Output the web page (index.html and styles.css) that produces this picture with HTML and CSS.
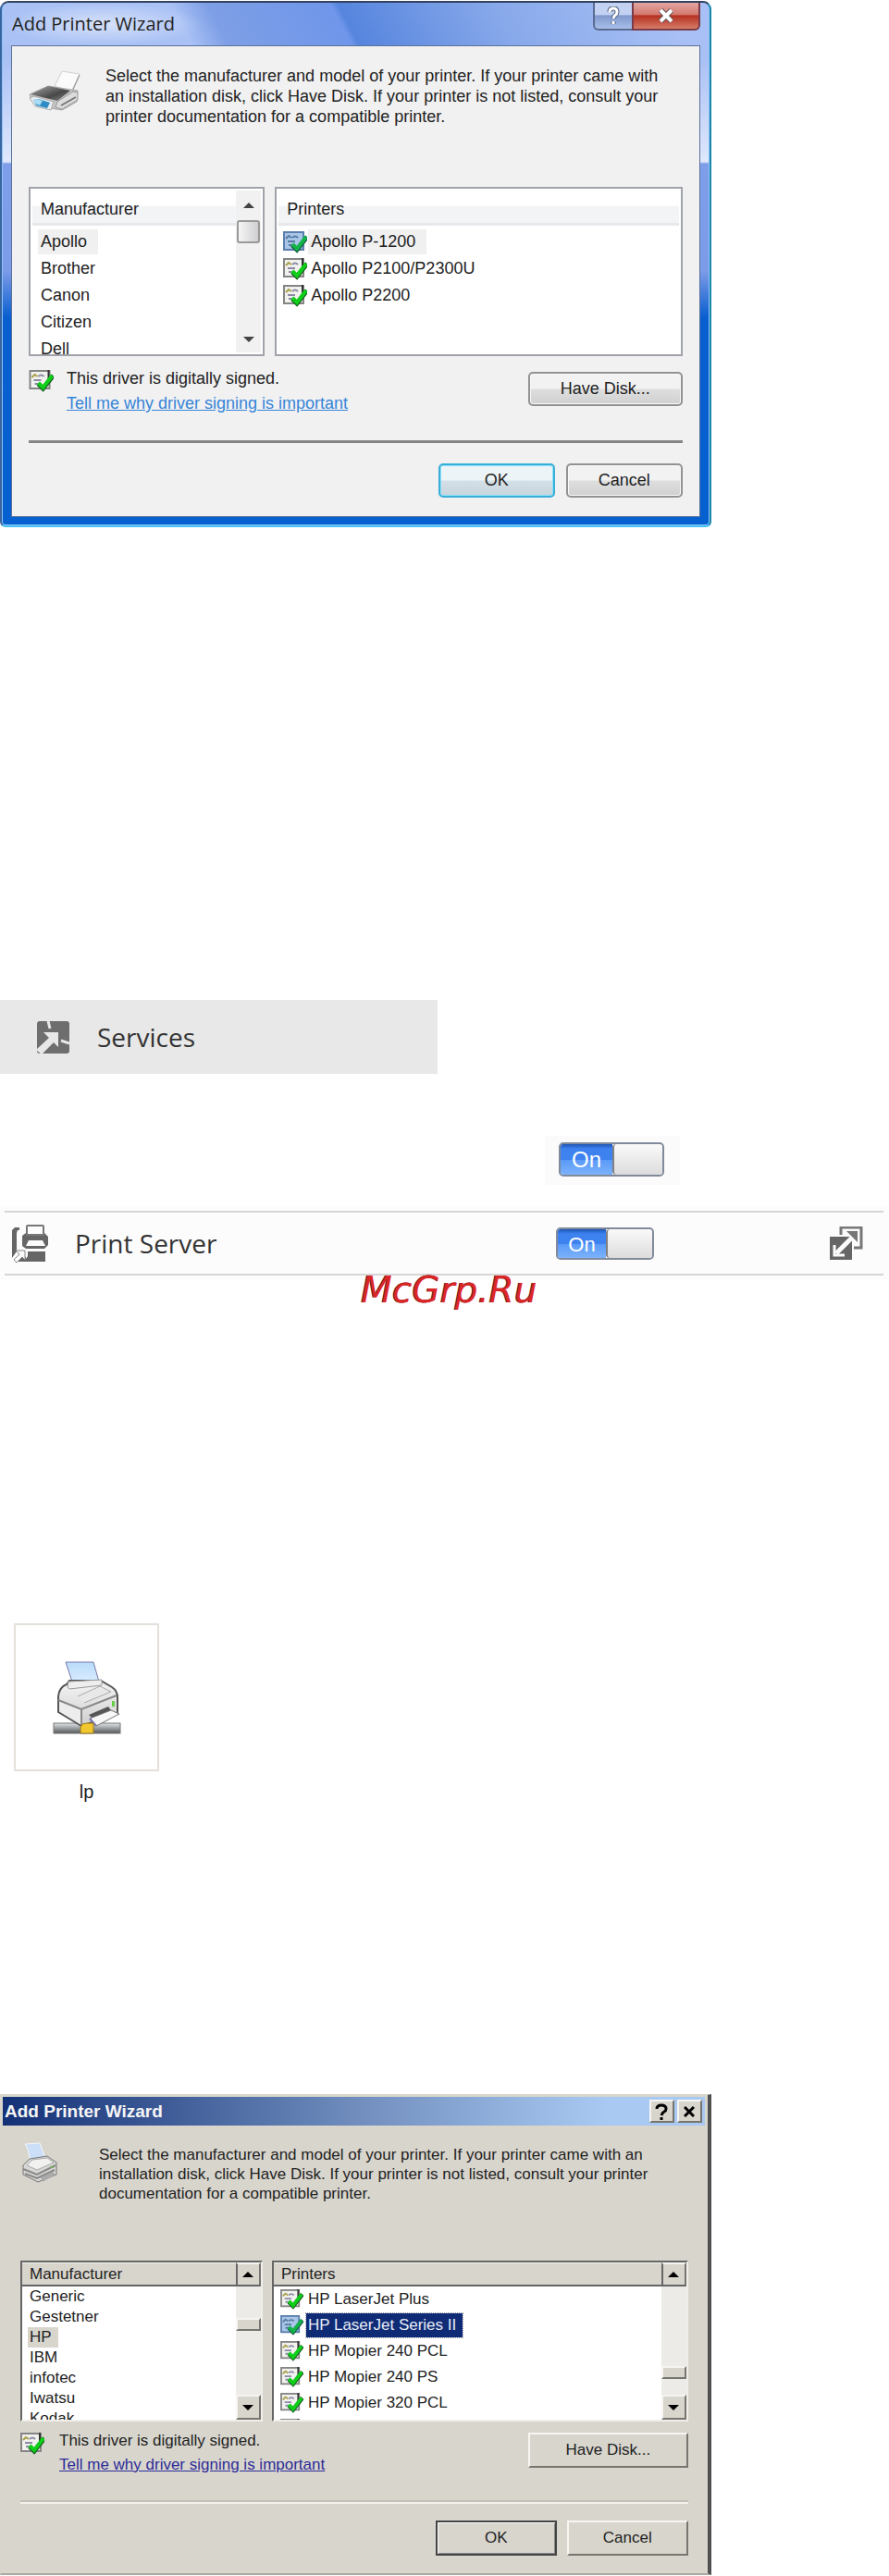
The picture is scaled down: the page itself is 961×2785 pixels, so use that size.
FILE: index.html
```html
<!DOCTYPE html>
<html lang="en">
<head>
<meta charset="utf-8">
<title>Add Printer Wizard</title>
<link rel="stylesheet" href="styles.css">
</head>
<body>
<svg class="defs" aria-hidden="true">
  <symbol id="signed" viewBox="0 0 26 24">
    <rect x="1" y="1" width="21" height="19" fill="#f1f1ee" stroke="#858585" stroke-width="2"/>
    <path d="M3 8l3-3 3 2" fill="none" stroke="#a8a047" stroke-width="2"/>
    <path d="M10 7q3-3 6 0M5 11h8M6 15h5" fill="none" stroke="#8b8ba8" stroke-width="2"/>
    <path d="M21 0v13" stroke="#333" stroke-width="2"/>
    <path d="M10 15l5 5L26 6" fill="none" stroke="#175c20" stroke-width="5"/>
    <path d="M10 14l5 5L25 6" fill="none" stroke="#0fd018" stroke-width="4"/>
  </symbol>
  <symbol id="signed-blue" viewBox="0 0 26 24">
    <rect x="1" y="1" width="21" height="19" fill="#a9c6e8" stroke="#5b7fac" stroke-width="2"/>
    <path d="M3 8l3-3 3 2M10 7q3-3 6 0M5 11h8M6 15h5" fill="none" stroke="#55799f" stroke-width="2"/>
    <path d="M10 15l5 5L26 6" fill="none" stroke="#145846" stroke-width="5"/>
    <path d="M10 14l5 5L25 6" fill="none" stroke="#12b548" stroke-width="4"/>
  </symbol>
  <symbol id="up" viewBox="0 0 12 6"><path d="M0 6l6-6 6 6z"/></symbol>
  <symbol id="down" viewBox="0 0 12 6"><path d="M0 0h12l-6 6z"/></symbol>
</svg>

<section class="vista" aria-label="Add Printer Wizard">
  <header class="vista-title">
    <h1>Add Printer Wizard</h1>
    <div class="vista-controls">
      <button class="help" aria-label="Help"><svg width="14" height="20" viewBox="0 0 14 20"><path d="M3 6q0-4 4-4t4 4q0 2-2 3.500T7 13M7 16v3" fill="none" stroke="#53617c" stroke-width="5"/><path d="M3 6q0-4 4-4t4 4q0 2-2 3.500T7 13M7 16v3" fill="none" stroke="#fff" stroke-width="3"/></svg></button>
      <button class="close" aria-label="Close"><svg width="20" height="16" viewBox="0 0 20 16"><path d="M4 2l12 12M16 2L4 14" stroke="#5d4b57" stroke-width="6"/><path d="M4 2l12 12M16 2L4 14" stroke="#fff" stroke-width="4"/></svg></button>
    </div>
  </header>
  <div class="vista-body">
    <div class="intro">
      <svg class="printer" width="56" height="46" viewBox="0 0 56 46">
        <defs>
          <linearGradient id="dark" x1="0" y1="0" x2="1" y2="1"><stop offset="0" stop-color="#aaa"/><stop offset=".6" stop-color="#484848"/><stop offset="1" stop-color="#888"/></linearGradient>
        </defs>
        <path d="M28 17l8-16 19 3-9 19z" fill="#fbfbfb" stroke="#d0d0d0"/>
        <path d="M47 23l8-18" stroke="#8b8b8b"/>
        <path d="M1 26l20-9 32 5-1 12-16 9-13-2-20-8z" fill="#c4c4c4" stroke="#aaa"/>
        <path d="M2 26l19-9 24 5-14 11z" fill="url(#dark)"/>
        <path d="M31 34l17-11 5 1v8l-17 10-7-2z" fill="#dcdcdc" stroke="#999"/>
        <path d="M35 38l16-9" stroke="#777" stroke-width="2"/>
        <path d="M1 30l5-2 21 6-3 9-17-4z" fill="#e8edf1" stroke="#aaa"/>
        <path d="M5 32l6-1 12 4-3 6-12-3z" fill="#2d8cc6"/>
        <path d="M5 32l5-1 5 2-3 5-5-2z" fill="#a9dcf2"/>
      </svg>
      <p>Select the manufacturer and model of your printer. If your printer came with<br>an installation disk, click Have Disk. If your printer is not listed, consult your<br>printer documentation for a compatible printer.</p>
    </div>
    <div class="lists">
      <div class="list">
        <div class="list-main">
          <h2>Manufacturer</h2>
          <ul><li><span class="picked">Apollo</span></li><li><span>Brother</span></li><li><span>Canon</span></li><li><span>Citizen</span></li><li><span>Dell</span></li></ul>
        </div>
        <div class="scroll"><svg width="12" height="6"><use href="#up"/></svg><i class="thumb"></i><svg class="end" width="12" height="6"><use href="#down"/></svg></div>
      </div>
      <div class="list printers">
        <div class="list-main">
          <h2>Printers</h2>
          <ul>
            <li><svg width="26" height="24"><use href="#signed-blue"/></svg><span class="picked">Apollo P-1200</span></li>
            <li><svg width="26" height="24"><use href="#signed"/></svg><span>Apollo P2100/P2300U</span></li>
            <li><svg width="26" height="24"><use href="#signed"/></svg><span>Apollo P2200</span></li>
          </ul>
        </div>
      </div>
    </div>
    <div class="driver">
      <svg width="27" height="24"><use href="#signed"/></svg>
      <p>This driver is digitally signed.<br><a href="#signing">Tell me why driver signing is important</a></p>
      <button class="btn wide">Have Disk...</button>
    </div>
    <hr>
    <div class="actions"><button class="btn default">OK</button><button class="btn">Cancel</button></div>
  </div>
</section>

<nav class="services">
  <svg width="35" height="35" viewBox="0 0 35 35">
    <rect width="35" height="35" rx="3" fill="#6e6e6e"/>
    <path d="M12 0l2 8M35 24l-9-3" stroke="#e8e8e8" stroke-width="3"/>
    <path d="M7 12h16v16l-5-5L5 36l-6-5 14-13z" fill="#e8e8e8"/>
  </svg>
  <span>Services</span>
</nav>

<div class="toggle-box">
  <label class="toggle large"><input type="checkbox" checked aria-label="Service"><span class="on">On</span><span class="knob"></span></label>
</div>

<div class="service-band">
  <div class="service-row">
    <div class="service-name">
      <svg width="40" height="41" viewBox="0 0 40 41">
        <path d="M0 6l3-3h5v3H6L5 9v15H0z" fill="#666"/>
        <path d="M0 23h5v6l-5 7zM15 40H3l5-5h7z" fill="#666"/>
        <path d="M11 12l4-3h20l4 4v9l-4 4H15l-4-3z" fill="#666"/>
        <path d="M16 11V2q0-1 1-1h16q1 0 1 1v9z" fill="#fcfcfc" stroke="#777" stroke-width="2"/>
        <path d="M18 17h15l3 6H15z" fill="#fcfcfc"/>
        <path d="M17 29h19v11H13l4-6z" fill="#666"/>
        <path d="M4 28h10v10l-3-3-6 6-3-3 6-6z" fill="#fcfcfc" stroke="#888" stroke-width="1"/>
      </svg>
      <span>Print Server</span>
    </div>
    <label class="toggle"><input type="checkbox" checked aria-label="Print Server"><span class="on">On</span><span class="knob"></span></label>
    <a class="open" href="#print-server" aria-label="Open Print Server">
      <svg width="36" height="36" viewBox="0 0 36 36">
        <path d="M12 9V1h22v22h-8" fill="none" stroke="#777" stroke-width="3"/>
        <rect y="11" width="24" height="25" fill="#666"/>
        <path d="M7 29L28 8" stroke="#fcfcfc" stroke-width="5"/>
        <path d="M5 20v11h11" fill="none" stroke="#fcfcfc" stroke-width="3"/>
        <path d="M18 5h12v12l-4-4-4-4z" fill="#777"/>
      </svg>
    </a>
  </div>
</div>
<p class="brand">McGrp.Ru</p>

<figure class="share">
  <div class="share-tile">
    <svg width="74" height="82" viewBox="0 0 74 82">
      <defs>
        <linearGradient id="paper" x1="0" y1="0" x2="0" y2="1"><stop offset="0" stop-color="#b9dcf9"/><stop offset="1" stop-color="#d9ecff"/></linearGradient>
        <linearGradient id="bar" x1="0" y1="0" x2="0" y2="1"><stop offset="0" stop-color="#e0e5e8"/><stop offset=".6" stop-color="#8b9093"/><stop offset="1" stop-color="#555"/></linearGradient>
        <linearGradient id="shell" x1="0" y1="0" x2="0" y2="1"><stop offset="0" stop-color="#f4f4f4"/><stop offset="1" stop-color="#cfcfcf"/></linearGradient>
      </defs>
      <rect x="1" y="69" width="72" height="11" fill="url(#bar)" stroke="#777"/>
      <path d="M14 3h30l6 21H21z" fill="url(#paper)" stroke="#7776ad"/>
      <path d="M6 40q1-10 9-13l3-4h34l12 7q6 4 6 11v18L31 72 6 57z" fill="url(#shell)" stroke="#555" stroke-width="2"/>
      <path d="M17 24l36-2v6l-35 4-2-2z" fill="#eee" stroke="#999"/>
      <path d="M27 40l24-11 12 6-29 12" fill="#e8e8e8" stroke="#aaa"/>
      <path d="M7 45l24 10v16L7 56z" fill="#ededed"/>
      <path d="M6 44l25 10 38-15M31 54v17" fill="none" stroke="#888" stroke-width="2"/>
      <path d="M39 60l21-9 3 4-19 10z" fill="#555"/>
      <path d="M40 64l23-9 9 4-25 13z" fill="#f7f7f7" stroke="#777"/>
      <path d="M40 64l7 8" stroke="#7776ad" stroke-width="2"/>
      <rect x="64" y="45" width="3" height="6" fill="#65ce45"/>
      <path d="M32 70l5-1h7v11H30v-7z" fill="#f1c730" stroke="#9c741c"/>
    </svg>
  </div>
  <figcaption>lp</figcaption>
</figure>

<section class="classic" aria-label="Add Printer Wizard">
  <header class="classic-title">
    <h1>Add Printer Wizard</h1>
    <button aria-label="Help"><svg width="14" height="18" viewBox="0 0 14 18"><path d="M2 6q0-4 5-4t5 4q0 2-2 3t-3 4M7 15v3" fill="none" stroke="#000" stroke-width="3"/></svg></button>
    <button aria-label="Close"><svg width="12" height="12" viewBox="0 0 12 12"><path d="M1 1l10 10M11 1L1 11" stroke="#000" stroke-width="3"/></svg></button>
  </header>
  <div class="classic-body">
    <div class="intro">
      <svg class="printer" width="38" height="44" viewBox="0 0 38 44">
        <path d="M3 2l16-1q3 8 6 16L8 20Q8 9 3 2z" fill="#cbdff8" stroke="#f3f6fa"/>
        <path d="M1 25l7-7 19-3 10 7v13L17 43 1 35z" fill="#d7d7d5" stroke="#777"/>
        <path d="M5 25l6-6 16-2 7 5-18 8z" fill="#f1f1ef" stroke="#aaa"/>
        <path d="M1 29l15 6 20-10M3 34l13 5 19-9" fill="none" stroke="#888" stroke-width="2"/>
        <path d="M20 38l13-6 3 3-14 8z" fill="#aaa"/>
        <path d="M30 27h4" stroke="#7ca965" stroke-width="2"/>
      </svg>
      <p>Select the manufacturer and model of your printer. If your printer came with an<br>installation disk, click Have Disk. If your printer is not listed, consult your printer<br>documentation for a compatible printer.</p>
    </div>
    <div class="lists">
      <div class="list">
        <div class="list-main">
          <h2>Manufacturer</h2>
          <ul><li><span>Generic</span></li><li><span>Gestetner</span></li><li><span class="picked">HP</span></li><li><span>IBM</span></li><li><span>infotec</span></li><li><span>Iwatsu</span></li><li><span>Kodak</span></li></ul>
        </div>
        <div class="scroll"><span class="arrow top"><svg width="12" height="6"><use href="#up"/></svg></span><i class="thumb"></i><span class="arrow"><svg width="12" height="6"><use href="#down"/></svg></span></div>
      </div>
      <div class="list printers">
        <div class="list-main">
          <h2>Printers</h2>
          <ul>
            <li><svg width="26" height="22"><use href="#signed"/></svg><span>HP LaserJet Plus</span></li>
            <li><svg width="26" height="22"><use href="#signed-blue"/></svg><span class="chosen">HP LaserJet Series II</span></li>
            <li><svg width="26" height="22"><use href="#signed"/></svg><span>HP Mopier 240 PCL</span></li>
            <li><svg width="26" height="22"><use href="#signed"/></svg><span>HP Mopier 240 PS</span></li>
            <li><svg width="26" height="22"><use href="#signed"/></svg><span>HP Mopier 320 PCL</span></li>
            <li><svg width="26" height="22"><use href="#signed"/></svg></li>
          </ul>
        </div>
        <div class="scroll low"><span class="arrow top"><svg width="12" height="6"><use href="#up"/></svg></span><i class="thumb"></i><span class="arrow"><svg width="12" height="6"><use href="#down"/></svg></span></div>
      </div>
    </div>
    <div class="driver">
      <svg width="26" height="24"><use href="#signed"/></svg>
      <p>This driver is digitally signed.<br><a href="#signing">Tell me why driver signing is important</a></p>
      <button class="btn wide">Have Disk...</button>
    </div>
    <hr>
    <div class="actions"><button class="btn default">OK</button><button class="btn">Cancel</button></div>
  </div>
</section>
</body>
</html>
```
FILE: styles.css
```css
* { box-sizing: border-box; }
body {
  margin: 0;
  padding-top: 1px;
  background: #fff;
  color: #222;
  font-family: "Liberation Sans", Arial, sans-serif;
  font-size: 18px;
}
h1, h2, p, ul, figure { margin: 0; padding: 0; }
ul { list-style: none; }
button { font: inherit; color: inherit; padding: 0; margin: 0; }
svg { display: block; flex: none; }
.defs { position: absolute; width: 0; height: 0; }

/* Shared wizard structure */
.intro, .driver, .actions, .lists, .list { display: flex; }
.intro p { white-space: nowrap; }
.lists { display: grid; }
.list { min-width: 0; overflow: hidden; background: #fff; }
.list-main { flex: 1; min-width: 0; }
.list h2 { font-size: 18px; font-weight: normal; }
.list li { display: flex; align-items: center; white-space: nowrap; }
.driver p { flex: 1; }
.driver a { color: #3684d8; }
.actions { justify-content: flex-end; }
hr { margin: 0; border: 0; }

/* Glass dialog */
.vista {
  width: 80%;
  padding: 0 10px 9px;
  border: 2px solid #21699c;
  border-color: #33435f #1b88ac #48c3f5 #38649f;
  border-radius: 9px 9px 6px 6px;
  background: linear-gradient(180deg, #a4bdf4 0, #a9c0f5 60px, #dfe8fd 172px, #7f9eea 174px, #7c9be8 290px, #0a5fd0 340px, #0560d0 100%);
  box-shadow: inset 0 0 0 1px #8fc3f8;
}
.vista-title {
  display: flex;
  justify-content: space-between;
  height: 46px;
  margin: 0 -9px;
  padding: 0 9px 0 0;
  border-radius: 7px 7px 0 0;
  background: linear-gradient(62deg, #a9c1f5 0, #a9c1f5 26%, #7e9fe6 31%, #6f96ea 48%, #5685de 49%, #87a8ea 70%, #a8c0f5 94%);
}
.vista-title h1 {
  padding: 9px 30px 0 10px;
  font: 20px/28px "Open Sans", "Noto Sans", sans-serif;
  background: radial-gradient(closest-side, #ffffff88, #ffffff00);
}
.vista-controls { display: flex; height: 30px; }
.vista-controls button {
  display: flex;
  align-items: center;
  justify-content: center;
  border: 2px solid #5b6b91;
  border-top: 0;
}
.vista-controls .help { width: 42px; border-right: 0; border-radius: 0 0 0 6px; background: linear-gradient(#c3d2f3 0 45%, #8199cc 50%, #a7bfe9); }
.vista-controls .close { width: 74px; border-color: #7b3a48; border-radius: 0 0 6px 0; background: linear-gradient(#e2a6a0 0, #d47a70 45%, #b53020 50%, #d67c68); }
.vista-body {
  padding: 21px 18px 20px;
  border: 1px solid #5d7199;
  background: #f1f1f1;
}
.vista .intro { margin-bottom: 65px; line-height: 22px; }
.vista .printer { margin: 5px 27px 0 0; }
.vista .lists { grid-template-columns: 255fr 440fr; gap: 11px; }
.vista .list { height: 183px; padding: 2px; border: 2px solid #a0a3aa; }
.vista .list h2 {
  height: 38px;
  margin-bottom: 3px;
  padding-left: 9px;
  line-height: 40px;
  border-bottom: 3px solid #e6e8eb;
  background: linear-gradient(#fff 45%, #f3f4f6 50%);
}
.vista .list li { height: 29px; padding-left: 6px; }
.vista .list li span { padding: 0 12px 0 3px; line-height: 27px; }
.picked { background: #f0f0f0; }
.vista .printers li { padding-left: 5px; gap: 1px; }
.vista .scroll { display: flex; flex-direction: column; align-items: center; width: 27px; padding: 13px 0 11px; fill: #444; background: #f1f1f1; }
.vista .thumb { width: 25px; height: 25px; margin-top: 13px; border: 2px solid #999; border-radius: 3px; background: linear-gradient(90deg, #f5f5f5, #cfcfd2); }
.scroll .end { margin-top: auto; }
.vista .driver { height: 54px; margin: 14px 0 23px; align-items: flex-start; }
.vista .driver > svg { margin: 1px 14px 0 0; }
.vista .driver p { margin-top: -3px; line-height: 27px; }
.vista hr { height: 3px; background: #858585; }
.vista .actions { gap: 12px; margin-top: 22px; }
.vista .btn {
  width: 126px;
  height: 37px;
  border: 2px solid #929292;
  border-radius: 5px;
  background: linear-gradient(#f2f2f2 0 48%, #dedede 52%, #d0d0d0);
  box-shadow: inset 0 0 0 1px #fafafa;
}
.vista .btn.wide { width: 167px; margin-top: 3px; }
.vista .btn.default { border-color: #39afd8; background: linear-gradient(#edf4f7 0 48%, #d3dfe6 52%, #c8d5dc); box-shadow: inset 0 0 0 1px #8ee2fb; }

/* Service settings */
.services {
  display: flex;
  align-items: center;
  gap: 30px;
  width: 49.2%;
  height: 80px;
  margin-top: 511px;
  padding-left: 40px;
  background: #e8e8e8;
}
.services, .service-name { color: #333; font: 28px/38px "Open Sans", "Noto Sans", sans-serif; }
.toggle-box { width: 146px; margin: 67px 0 23px 61.3%; padding: 7px 15px 9px; background: #fbfbfb; }
.toggle { position: relative; display: flex; width: 106px; height: 35px; border: 2px solid #808a9b; border-radius: 5px; overflow: hidden; font-size: 22px; }
.toggle.large { width: 114px; height: 37px; font-size: 24px; }
.toggle input { position: absolute; inset: 0; width: 100%; height: 100%; margin: 0; opacity: 0; }
.toggle .on {
  flex: 54;
  line-height: 34px;
  text-align: center;
  color: #fff;
  background: linear-gradient(#1c55b5 0, #3e82f0 5px, #3e82f0 50%, #5a9bf8 53%, #7db2fb);
}
.toggle .knob { flex: 50; border-left: 2px solid #808080; border-radius: 4px; background: linear-gradient(#fafafa, #dcdcdc); }
.service-band { padding: 5px 6px 5px 5px; background: #fcfcfc; }
.service-row {
  display: grid;
  grid-template-columns: 596fr 296fr 58fr;
  align-items: center;
  height: 70px;
  border: solid #d6d6d6;
  border-width: 2px 0;
}
.service-name { display: flex; align-items: center; gap: 28px; padding-left: 8px; }
.brand { position: relative; margin-top: -12px; padding-left: 10px; text-align: center; color: #dc2626; font: italic 39px/46px "DejaVu Sans", sans-serif; text-shadow: -1px 0 #5a2020; }

/* Network printer tile */
.share { width: 157px; margin: 337px 0 0 15px; }
.share-tile { display: flex; justify-content: center; height: 160px; padding-top: 37px; border: 2px solid #e4e0da; }
.share figcaption { padding-top: 8px; text-align: center; font-size: 20px; line-height: 28px; }

/* Classic dialog */
.classic {
  width: 80%;
  margin-top: 313px;
  padding: 2px 3px 0 2px;
  border: solid #d8d5cd;
  border-width: 1px 4px 2px 1px;
  border-right-color: #505050;
  border-bottom-color: #aaa8a2;
  background: #d8d5cd;
  font-size: 17px;
}
.classic-title { display: flex; gap: 3px; height: 31px; padding: 3px 3px 3px 2px; background: linear-gradient(90deg, #143177, #7390c0 52%, #a9c9f2 86%); }
.classic-title h1 { flex: 1; color: #f5f5f5; font-size: 19px; line-height: 26px; }
.classic-title button, .classic .btn, .arrow, .classic .thumb {
  background: #d8d5cd;
  border: 2px solid;
  border-color: #f6f5f1 #77756f #77756f #f6f5f1;
}
.classic-title button { display: flex; justify-content: center; align-items: center; width: 27px; }
.classic-body { padding: 21px 18px 19px 19px; }
.classic .intro { margin-bottom: 62px; line-height: 21px; }
.classic .printer { margin: -3px 45px 0 2px; }
.classic .lists { grid-template-columns: 262fr 450fr; gap: 10px; }
.classic .list { height: 174px; border: 2px solid; border-color: #666 #f0eeea #f0eeea #666; }
.classic .list h2 { height: 26px; padding-left: 8px; border-bottom: 2px solid #666; background: #d8d5cd; font-size: 17px; line-height: 26px; box-shadow: inset 0 1px #f6f5f1; }
.classic .list li { height: 22px; padding-left: 6px; }
.classic .list li span { padding: 0 7px 0 2px; line-height: 22px; }
.classic .printers li { height: 28px; gap: 3px; }
.classic .list .picked { background: #d8d5cd; }
.classic .list .chosen { color: #e8ecf8; background: #0f2b76; outline: 1px dotted #99a; line-height: 26px; }
.classic .scroll { display: flex; flex-direction: column; width: 27px; background: #ecebe7; }
.arrow { display: flex; flex: none; align-items: center; justify-content: center; height: 27px; }
.arrow.top { height: 26px; border-bottom-color: #666; border-left-color: #666; }
.classic .thumb { height: 14px; margin: 34px 0 auto; }
.classic .low .thumb { margin-top: 86px; }
.classic .driver { height: 52px; margin: 12px 0 21px; }
.classic .driver > svg { margin: 0 16px 0 0; }
.classic .driver p { line-height: 26px; margin-top: -4px; }
.classic .driver a { color: #2c2c98; }
.classic hr { height: 4px; border-top: 2px solid #c3c0b8; border-bottom: 2px solid #f3f1ec; }
.classic .actions { gap: 11px; margin-top: 18px; }
.classic .btn { width: 131px; height: 38px; }
.classic .btn.wide { width: 173px; }
.classic .btn.default { border-color: #444; box-shadow: inset 1px 1px #fff, inset -1px -1px #888; }
```
